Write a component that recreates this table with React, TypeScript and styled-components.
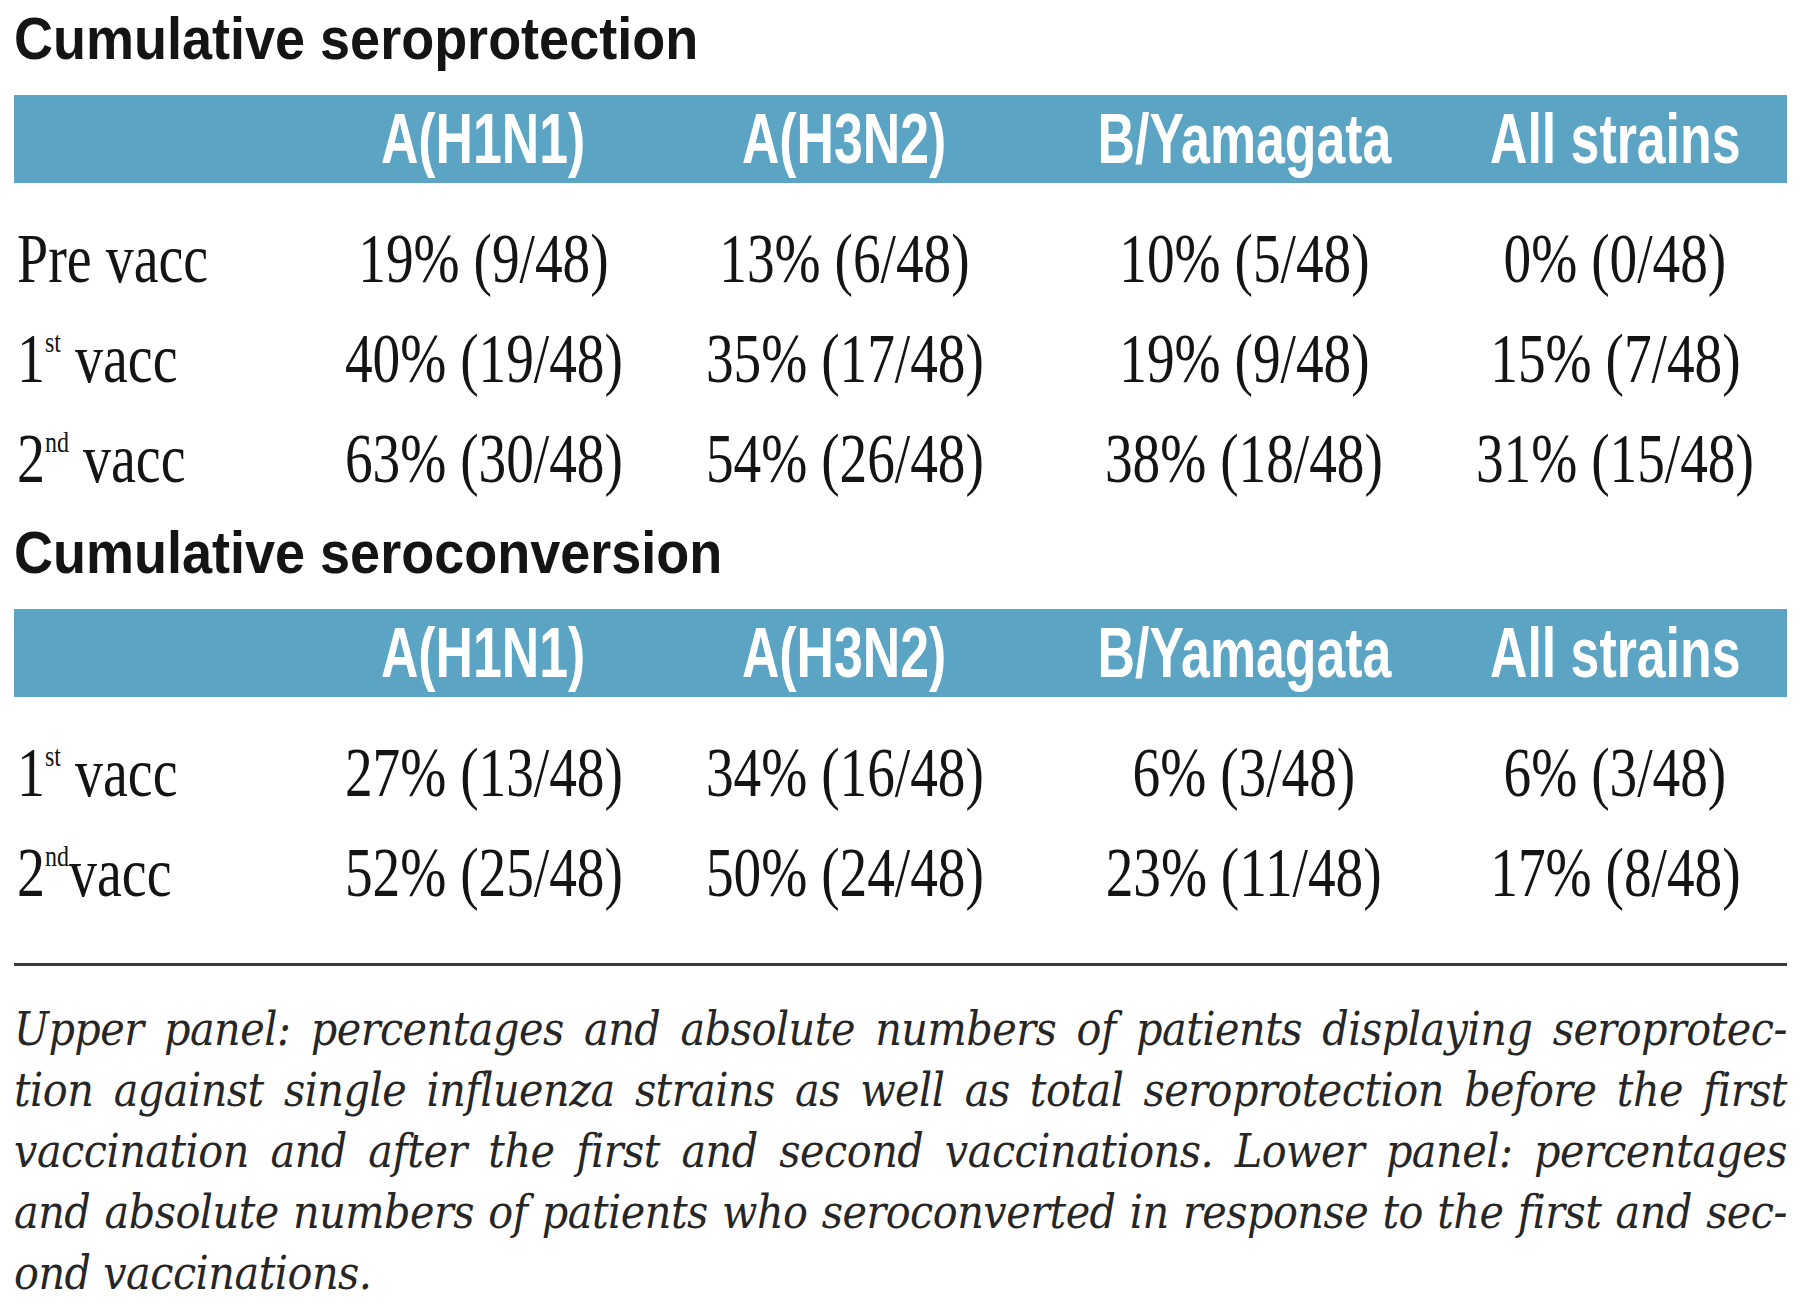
import React from "react";
import styled, { createGlobalStyle } from "styled-components";

const GlobalStyle = createGlobalStyle`
  html, body {
    margin: 0;
    padding: 0;
    background: #fff;
  }
`;

const columns = "289px 361px 361px 438px 304px";

const Page = styled.div`
  box-sizing: border-box;
  width: 1800px;
  padding: 4px 13px 0 14px;
  color: #141414;
`;

const Squeeze = styled.span<{ $x: number; $origin?: string }>`
  display: inline-block;
  flex: none;
  white-space: nowrap;
  transform: scaleX(${p => p.$x});
  transform-origin: ${p => p.$origin || "center"};
`;

const Title = styled.h2<{ $gap: number }>`
  margin: ${p => p.$gap}px 0 0 0;
  height: 70px;
  font-family: "Liberation Sans", Arial, sans-serif;
  font-weight: 700;
  font-size: 60px;
  line-height: 70px;
`;

const HeadBar = styled.div<{ $gap: number }>`
  display: grid;
  grid-template-columns: ${columns};
  align-items: center;
  height: 88px;
  margin-top: ${p => p.$gap}px;
  background: #5ca4c3;
`;

const HeadCell = styled.div`
  display: flex;
  justify-content: center;
  color: #fff;
  font-family: "Liberation Sans", Arial, sans-serif;
  font-weight: 700;
  font-size: 70px;
  line-height: 1;
`;

const Body = styled.div<{ $gap: number }>`
  margin-top: ${p => p.$gap}px;
`;

const Row = styled.div`
  display: grid;
  grid-template-columns: ${columns};
  align-items: center;
  height: 100px;
  font-family: "Liberation Serif", "Times New Roman", serif;
  font-size: 70px;
  line-height: 100px;
`;

const Label = styled.div`
  padding-left: 3px;
  text-align: left;
`;

const Value = styled.div`
  display: flex;
  justify-content: center;
`;

const Sup = styled.span`
  font-size: 30px;
  line-height: 1;
  vertical-align: 30px;
`;

const Rule = styled.hr`
  height: 3px;
  margin: 40px 0 0 0;
  border: 0;
  background: #3a3a3a;
`;

const Caption = styled.div`
  margin-top: 33px;
  font-family: "DejaVu Serif Condensed", "DejaVu Serif", serif;
  font-style: italic;
  font-size: 46px;
  letter-spacing: -0.5px;
  line-height: 61px;
  color: #262626;
`;

const CaptionLine = styled.div<{ $last?: boolean }>`
  white-space: nowrap;
  text-align: ${p => (p.$last ? "left" : "justify")};
  text-align-last: ${p => (p.$last ? "left" : "justify")};
`;

const strains = ["A(H1N1)", "A(H3N2)", "B/Yamagata", "All strains"];

type Line = { label: React.ReactNode; values: string[] };

const protection: Line[] = [
  { label: "Pre vacc", values: ["19% (9/48)", "13% (6/48)", "10% (5/48)", "0% (0/48)"] },
  {
    label: (
      <>
        1<Sup>st</Sup> vacc
      </>
    ),
    values: ["40% (19/48)", "35% (17/48)", "19% (9/48)", "15% (7/48)"],
  },
  {
    label: (
      <>
        2<Sup>nd</Sup> vacc
      </>
    ),
    values: ["63% (30/48)", "54% (26/48)", "38% (18/48)", "31% (15/48)"],
  },
];

const conversion: Line[] = [
  {
    label: (
      <>
        1<Sup>st</Sup> vacc
      </>
    ),
    values: ["27% (13/48)", "34% (16/48)", "6% (3/48)", "6% (3/48)"],
  },
  {
    label: (
      <>
        2<Sup>nd</Sup>vacc
      </>
    ),
    values: ["52% (25/48)", "50% (24/48)", "23% (11/48)", "17% (8/48)"],
  },
];

const captionLines = [
  "Upper panel: percentages and absolute numbers of patients displaying seroprotec-",
  "tion against single influenza strains as well as total seroprotection before the first",
  "vaccination and after the first and second vaccinations. Lower panel: percentages",
  "and absolute numbers of patients who seroconverted in response to the first and sec-",
  "ond vaccinations.",
];

const Panel: React.FC<{ title: string; lines: Line[]; top: number }> = ({ title, lines, top }) => (
  <section>
    <Title $gap={top}>
      <Squeeze $x={0.9} $origin="left">{title}</Squeeze>
    </Title>
    <HeadBar $gap={21}>
      <div />
      {strains.map(s => (
        <HeadCell key={s}>
          <Squeeze $x={0.74}>{s}</Squeeze>
        </HeadCell>
      ))}
    </HeadBar>
    <Body $gap={26}>
      {lines.map((line, i) => (
        <Row key={i}>
          <Label>
            <Squeeze $x={0.8} $origin="left">{line.label}</Squeeze>
          </Label>
          {line.values.map((v, j) => (
            <Value key={j}>
              <Squeeze $x={0.79}>{v}</Squeeze>
            </Value>
          ))}
        </Row>
      ))}
    </Body>
  </section>
);

export default function App() {
  return (
    <>
      <GlobalStyle />
      <Page>
        <Panel title="Cumulative seroprotection" lines={protection} top={0} />
        <Panel title="Cumulative seroconversion" lines={conversion} top={9} />
        <Rule />
        <Caption>
          {captionLines.map((t, i) => (
            <CaptionLine key={i} $last={i === captionLines.length - 1}>
              {t}
            </CaptionLine>
          ))}
        </Caption>
      </Page>
    </>
  );
}
